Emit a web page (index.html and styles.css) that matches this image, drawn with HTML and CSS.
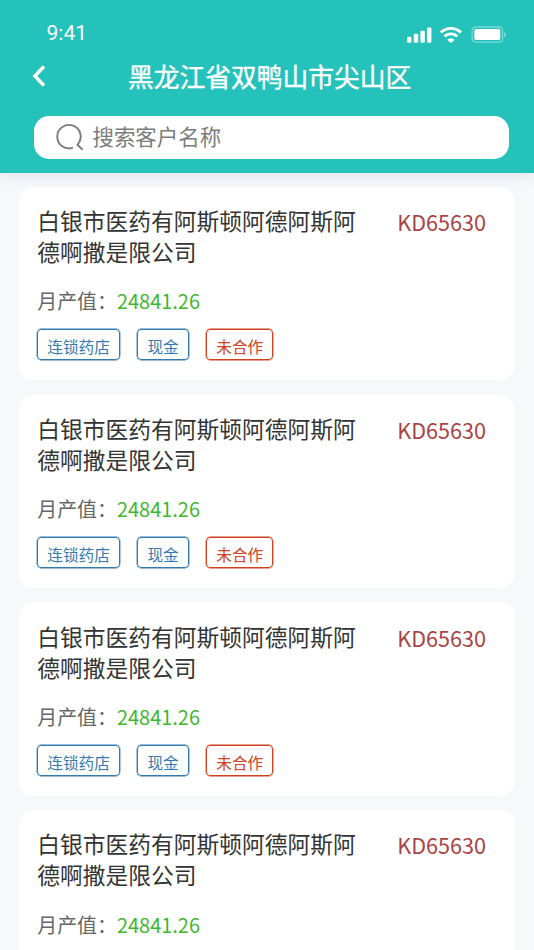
FILE: index.html
```html
<!DOCTYPE html>
<html lang="zh-CN">
  <head>
    <meta charset="UTF-8" />
    <meta name="viewport" content="width=device-width, initial-scale=1.0" />
    <title>黑龙江省双鸭山市尖山区</title>
    <link rel="stylesheet" href="styles.css">
  </head>
  <body>
    <header class="header">
      <div class="status">
        <span class="time">9:41</span>
        <svg class="statusIcons" width="100" height="18" viewBox="0 0 100 18" fill="#fff">
          <rect x="1" y="10.7" width="4.4" height="6" rx="1.1" />
          <rect x="7.8" y="7.8" width="4.4" height="8.9" rx="1.1" />
          <rect x="14.4" y="4.8" width="4.4" height="11.9" rx="1.1" />
          <rect x="21" y="1.5" width="4.4" height="15.2" rx="1.1" />
          <g fill="none" stroke="#fff" stroke-width="2.9">
            <path d="M34.8 6.6a14.2 14.2 0 0 1 20.2 0" />
            <path d="M38.5 10.5a9 9 0 0 1 12.8 0" />
          </g>
          <path d="M41.2 13.7a5.2 5.2 0 0 1 7.4 0l-3 2.8a1 1 0 0 1-1.4 0z" />
          <rect x="66.2" y="1" width="30.4" height="15.2" rx="3.6" fill="none" stroke="#fff" stroke-width="1.3" opacity="0.4" />
          <rect x="68.3" y="3.1" width="26" height="11" rx="1.8" />
          <path d="M98 6.2c2.3 1 2.3 4 0 5z" opacity="0.45" />
        </svg>
      </div>
      <div class="navbar">
        <svg class="back" width="16" height="24" viewBox="0 0 16 24" fill="none" stroke="#fff" stroke-width="3.4">
          <path d="M13 2.5L3.8 12l9.2 9.5" />
        </svg>
        <h1>黑龙江省双鸭山市尖山区</h1>
      </div>
      <div class="search">
        <svg width="28" height="28" viewBox="0 0 28 28" fill="none" stroke="#7c7c7c" stroke-width="1.9">
          <path d="M17 24.6A11.7 11.7 0 1 1 21.8 21.3M20.9 21.3L26.6 26.8" />
        </svg>
        <span>搜索客户名称</span>
      </div>
    </header>
    <main class="list">
      <div class="card">
        <div class="top">
          <h2>白银市医药有阿斯顿阿德阿斯阿德啊撒是限公司</h2>
          <span class="code">KD65630</span>
        </div>
        <p class="output">月产值：<span>24841.26</span></p>
        <div class="tags">
          <span class="tag">连锁药店</span>
          <span class="tag">现金</span>
          <span class="tag red">未合作</span>
        </div>
      </div>
      <div class="card">
        <div class="top">
          <h2>白银市医药有阿斯顿阿德阿斯阿德啊撒是限公司</h2>
          <span class="code">KD65630</span>
        </div>
        <p class="output">月产值：<span>24841.26</span></p>
        <div class="tags">
          <span class="tag">连锁药店</span>
          <span class="tag">现金</span>
          <span class="tag red">未合作</span>
        </div>
      </div>
      <div class="card">
        <div class="top">
          <h2>白银市医药有阿斯顿阿德阿斯阿德啊撒是限公司</h2>
          <span class="code">KD65630</span>
        </div>
        <p class="output">月产值：<span>24841.26</span></p>
        <div class="tags">
          <span class="tag">连锁药店</span>
          <span class="tag">现金</span>
          <span class="tag red">未合作</span>
        </div>
      </div>
      <div class="card last">
        <div class="top">
          <h2>白银市医药有阿斯顿阿德阿斯阿德啊撒是限公司</h2>
          <span class="code">KD65630</span>
        </div>
        <p class="output">月产值：<span>24841.26</span></p>
      </div>
    </main>
  </body>
</html>
```

FILE: styles.css
```css
* {
  box-sizing: border-box;
}

body {
  margin: 0;
  height: 950px;
  overflow: hidden;
  display: flex;
  flex-direction: column;
  background-color: #f6f8fa;
  font-family: "Noto Sans CJK SC", sans-serif;
}

h1,
h2,
p {
  margin: 0;
  font-weight: 400;
}

svg {
  display: block;
  flex: none;
}

.header {
  flex: none;
  height: 172.5px;
  padding-top: 20px;
  background-color: #24c2bb;
  box-shadow: 0 2px 14px rgba(70, 70, 120, 0.13);
}

.status {
  display: flex;
  justify-content: space-between;
  height: 36px;
  padding: 0 28px 0 46.5px;
}

.time {
  color: #fff;
  font-family: Roboto, sans-serif;
  font-size: 21px;
  line-height: 27px;
}

.statusIcons {
  margin-top: 6px;
}

.navbar {
  display: flex;
  height: 40px;
  padding-left: 31px;
}

.back {
  margin-top: 8px;
}

.navbar h1 {
  margin-left: 81px;
  color: #fff;
  font-size: 25.75px;
  line-height: 40px;
  white-space: nowrap;
  -webkit-text-stroke: 0.4px #fff;
}

.search {
  display: flex;
  align-items: center;
  gap: 8.5px;
  width: 475px;
  height: 43px;
  margin: 19.6px 0 0 34.4px;
  padding-left: 21.6px;
  background-color: #fff;
  border-radius: 15px;
  color: #7c7c7c;
  font-size: 21.45px;
}

.search span {
  line-height: 30px;
  padding-bottom: 2px;
}

.list {
  flex: 1;
  min-height: 0;
  display: flex;
  flex-direction: column;
  gap: 14.3px;
  padding: 14.3px 19px 0;
}

.card {
  flex: none;
  height: 193.5px;
  padding: 18.3px 29px 0 18.2px;
  background-color: #fff;
  border-radius: 15px;
}

.last {
  flex: 1;
  height: auto;
  min-height: 0;
  border-radius: 15px 15px 0 0;
}

.top {
  display: flex;
  justify-content: space-between;
}

.top h2 {
  width: 322px;
  color: #333;
  font-size: 22.75px;
  line-height: 31px;
}

.code {
  color: #a84444;
  font-size: 21.6px;
  line-height: 33px;
}

.output {
  margin-top: 19.3px;
  color: #666;
  font-size: 19.95px;
  line-height: 30px;
}

.output span {
  color: #3fb72f;
}

.tags {
  display: flex;
  gap: 17.4px;
  margin-top: 12.8px;
}

.tag {
  height: 31px;
  padding: 0 9.1px;
  border: 1px solid #3378ae;
  border-radius: 4px;
  box-shadow: 0 0 0 0.4px #3378ae;
  color: #3378ae;
  font-size: 15.65px;
  line-height: 33px;
}

.red {
  color: #d1401f;
  border-color: #d1401f;
  box-shadow: 0 0 0 0.4px #d1401f;
}
```
